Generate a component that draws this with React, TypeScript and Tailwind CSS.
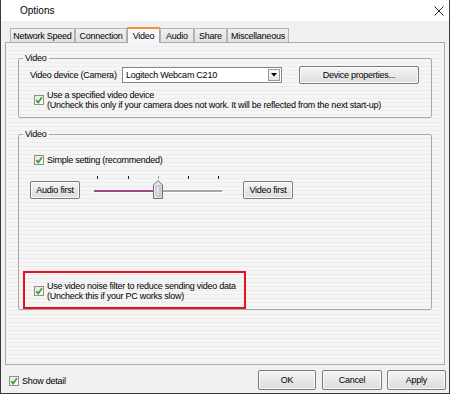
import React from "react";

const tabs = [
  { label: "Network Speed", w: "w-[65px]" },
  { label: "Connection", w: "w-[52px]" },
  { label: "Video", w: "w-[33px]", active: true },
  { label: "Audio", w: "w-[34px]" },
  { label: "Share", w: "w-[33px]" },
  { label: "Miscellaneous", w: "w-[62px]" },
];

const CheckBox = () => (
  <svg width="10" height="10" viewBox="0 0 10 10" className="shrink-0">
    <defs>
      <linearGradient id="cbg" x1="0" y1="0" x2="1" y2="1">
        <stop offset="0" stopColor="#e4e4e4" />
        <stop offset="1" stopColor="#ffffff" />
      </linearGradient>
    </defs>
    <rect x="0.5" y="0.5" width="9" height="9" fill="url(#cbg)" stroke="#8e8f8f" />
    <path d="M2.3 5.1 L4.2 7.5 L7.9 2.3" fill="none" stroke="#3da22f" strokeWidth="1.7" />
  </svg>
);

const Button = ({ label, className }: { label: string; className: string }) => (
  <div
    className={`flex items-center justify-center rounded-[2px] border border-[#7a7a7a] bg-gradient-to-b from-[#f5f5f5] to-[#dcdcdc] shadow-[inset_0_0_0_1px_#fbfbfb] ${className}`}
  >
    {label}
  </div>
);

const Slider = () => (
  <svg width="132" height="25" viewBox="0 0 132 25" className="shrink-0">
    {[5, 36, 66, 96, 126].map((x) => (
      <rect key={x} x={x} y="1" width="1" height="3" fill={x === 66 ? "#9a9a9a" : "#222"} />
    ))}
    <rect x="2" y="15" width="128" height="2" fill="#a7a7a7" />
    <rect x="2" y="17" width="128" height="1" fill="#ffffff" />
    <rect x="2" y="15" width="60" height="2" fill="#a2468a" />
    <defs>
      <linearGradient id="thumb" x1="0" y1="0" x2="1" y2="0">
        <stop offset="0" stopColor="#f4f4f4" />
        <stop offset="1" stopColor="#d4d4d4" />
      </linearGradient>
    </defs>
    <path d="M61.5 10 L66 5.5 L70.5 10 L70.5 23.5 L61.5 23.5 Z" fill="url(#thumb)" stroke="#6f6f6f" />
    <rect x="64" y="11" width="4" height="10" fill="none" stroke="#b5b5b5" />
  </svg>
);

export default function App() {
  return (
    <div className="flex h-[394px] w-[450px] flex-col border-x border-b border-[#3a3a3a] bg-[#f0f0f0] font-['Liberation_Sans',Arial,sans-serif] text-[9px] leading-[10px] tracking-[-0.25px] text-black">
      {/* title bar */}
      <div className="flex h-[21px] items-center justify-between bg-white pl-[19px] pr-[5px]">
        <span className="text-[10px] tracking-normal">Options</span>
        <svg width="10" height="10" viewBox="0 0 10 10">
          <path d="M0.5 0.5 L9.5 9.5 M9.5 0.5 L0.5 9.5" stroke="#222" strokeWidth="1" />
        </svg>
      </div>

      {/* tabs */}
      <div className="ml-[9px] mt-[6px] flex h-[15px] items-end">
        {tabs.map((t) =>
          t.active ? (
            <div
              key={t.label}
              className={`relative z-10 -mb-px flex h-[16px] items-center justify-center border border-b-0 border-t-2 border-[#a9a9a9] border-t-[#ef9140] bg-[#f7f7f7] ${t.w}`}
            >
              {t.label}
            </div>
          ) : (
            <div
              key={t.label}
              className={`flex h-[14px] items-center justify-center border border-b-0 border-[#b4b4b4] bg-gradient-to-b from-[#f0f0f0] to-[#e2e2e2] ${t.w}`}
            >
              {t.label}
            </div>
          )
        )}
      </div>

      {/* tab panel */}
      <div className="ml-[4px] h-[323px] w-[440px] border border-[#a9a9a9] bg-[repeating-linear-gradient(to_bottom,#f5f5f5_0px,#f5f5f5_3px,#ececec_3px,#ececec_4px)]">
        <fieldset className="ml-[12px] mt-[10px] w-[414px] rounded-[2px] border border-[#a8a8a8] pb-[7px]">
          <legend className="ml-[4px] px-[2px] leading-[10px]">Video</legend>
          <div className="mt-[3px] flex h-[18px] items-center pl-[11px]">
            <span className="w-[92px]">Video device (Camera)</span>
            <div className="flex h-[16px] w-[160px] items-center justify-between border border-[#828790] bg-white pl-[3px] pr-[1px]">
              <span>Logitech Webcam C210</span>
              <div className="flex h-[12px] w-[12px] items-center justify-center border border-[#9a9a9a] bg-gradient-to-b from-[#f8f8f8] to-[#e4e4e4]">
                <svg width="6" height="4" viewBox="0 0 6 4">
                  <path d="M0 0 L6 0 L3 3.5 Z" fill="#000" />
                </svg>
              </div>
            </div>
            <Button label="Device properties..." className="ml-[17px] h-[18px] w-[120px]" />
          </div>
          <div className="mt-[6px] flex items-center gap-[3px] pl-[15px]">
            <CheckBox />
            <div>
              <div>Use a specified video device</div>
              <div>(Uncheck this only if your camera does not work. It will be reflected from the next start-up)</div>
            </div>
          </div>
        </fieldset>

        <fieldset className="ml-[12px] mt-[11px] w-[414px] rounded-[2px] border border-[#a8a8a8]">
          <legend className="ml-[4px] px-[2px] leading-[10px]">Video</legend>
          <div className="mt-[16px] flex items-center gap-[3px] pl-[15px]">
            <CheckBox />
            <span>Simple setting (recommended)</span>
          </div>
          <div className="mt-[10px] flex items-start pl-[11px]">
            <Button label="Audio first" className="mt-[6px] h-[18px] w-[50px]" />
            <div className="ml-[12px]">
              <Slider />
            </div>
            <Button label="Video first" className="ml-[19px] mt-[6px] h-[18px] w-[50px]" />
          </div>
          <div className="ml-[4px] mt-[71px] h-[38px] w-[223px] border-2 border-[#e8101c] pl-[9px] pt-[8px]">
            <div className="flex items-center gap-[3px]">
              <CheckBox />
              <div>
                <div>Use video noise filter to reduce sending video data</div>
                <div>(Uncheck this if your PC works slow)</div>
              </div>
            </div>
          </div>
        </fieldset>
      </div>

      {/* bottom bar */}
      <div className="mt-[5px] flex items-start pl-[8px] pr-[3px]">
        <div className="mt-[6px] flex items-center gap-[3px]">
          <CheckBox />
          <span>Show detail</span>
        </div>
        <Button label="OK" className="ml-auto h-[20px] w-[58px]" />
        <Button label="Cancel" className="ml-[6px] h-[20px] w-[60px]" />
        <Button label="Apply" className="ml-[5px] h-[20px] w-[59px]" />
      </div>
    </div>
  );
}
